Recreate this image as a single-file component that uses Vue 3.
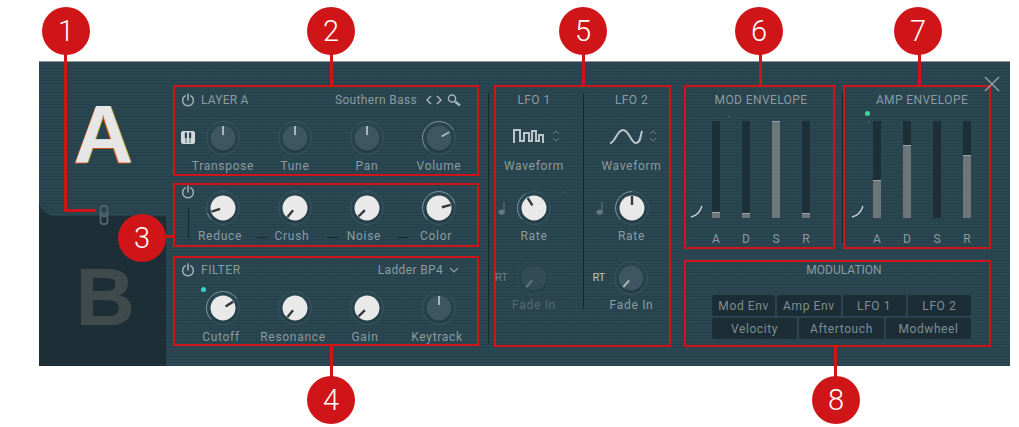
<script setup>
// knob angles are degrees from 12 o'clock, -135 is fully left
const layerKnobs = [
  { label: 'Transpose', angle: 0, bipolar: true },
  { label: 'Tune', angle: 0, bipolar: true },
  { label: 'Pan', angle: 0, bipolar: true },
  { label: 'Volume', angle: 60 },
]
const fxKnobs = [
  { label: 'Reduce', angle: -108, white: true },
  { label: 'Crush', angle: -140, white: true },
  { label: 'Noise', angle: -135, white: true },
  { label: 'Color', angle: 75, white: true },
]
const filterKnobs = [
  { label: 'Cutoff', angle: 58, white: true },
  { label: 'Resonance', angle: -140, white: true },
  { label: 'Gain', angle: -135, white: true },
  { label: 'Keytrack', angle: 0, bipolar: true },
]
const lfos = [
  { name: 'LFO 1', wave: 'M1 15V2h6v11h4V5h5v8h3V3h4v10h3V7h4v8', rate: -32, fade: -140, dim: true },
  { name: 'LFO 2', wave: 'M0 15C5 15 7 2 13 2s8 13 13 13S30 8 32 3', rate: 0, fade: -140, dim: false },
]
const envelopes = [
  {
    title: 'MOD ENVELOPE',
    bars: [{ label: 'A', fill: 6 }, { label: 'D', fill: 5 }, { label: 'S', fill: 97 }, { label: 'R', fill: 5 }],
  },
  {
    title: 'AMP ENVELOPE',
    dot: true,
    bars: [{ label: 'A', fill: 38 }, { label: 'D', fill: 73 }, { label: 'S', fill: 0 }, { label: 'R', fill: 63 }],
  },
]
const modRows = [
  ['Mod Env', 'Amp Env', 'LFO 1', 'LFO 2'],
  ['Velocity', 'Aftertouch', 'Modwheel'],
]

// arc of the value ring, from the left stop to the knob angle
const arc = (angle) => {
  const point = (deg) => {
    const rad = (deg * Math.PI) / 180
    return `${(18 + 16.5 * Math.sin(rad)).toFixed(2)} ${(18 - 16.5 * Math.cos(rad)).toFixed(2)}`
  }
  return `M${point(-135)}A16.5 16.5 0 ${angle > 45 ? 1 : 0} 1 ${point(angle)}`
}
const showArc = (knob) => !knob.bipolar && knob.angle > -135
</script>

<template>
  <div class="page">
    <div class="panel">
      <div class="layers">
        <div class="layer-a">
          <span class="letter letter-a">A</span>
          <svg class="link" width="10" height="20" viewBox="0 0 10 20">
            <rect x="1.5" y="0.8" width="7" height="10.5" rx="3" />
            <rect x="1.5" y="8.7" width="7" height="10.5" rx="3" />
          </svg>
        </div>
        <div class="layer-b">
          <span class="letter letter-b">B</span>
        </div>
      </div>

      <div class="main">
        <div class="col-left">
          <section class="box layer">
            <div class="head">
              <svg class="power" width="14" height="14" viewBox="0 0 14 14">
                <path d="M4.2 2.8a5.4 5.4 0 1 0 5.6 0M7 1v6" />
              </svg>
              <span class="name">LAYER A</span>
              <span class="preset">Southern Bass</span>
              <svg class="browse" width="38" height="14" viewBox="0 0 38 14">
                <path d="M6 3 2 7l4 4M12 3l4 4-4 4" />
                <circle cx="27" cy="5.5" r="3.6" />
                <path class="thick" d="m30 8.5 5 4" />
              </svg>
            </div>
            <div class="knobs">
              <div v-for="k in layerKnobs" :key="k.label" class="cell">
                <svg class="knob" width="36" height="36" viewBox="0 0 36 36">
                  <circle class="ring" cx="18" cy="18" r="16.5" />
                  <path v-if="showArc(k)" class="value" :d="arc(k.angle)" />
                  <circle class="shade" cx="18" cy="19" r="13.5" />
                  <circle :class="k.white ? 'cap-white' : 'cap-dark'" cx="18" cy="18" r="12.5" />
                  <line :class="k.white ? 'tick-dark' : 'tick-light'" x1="18" y1="6" x2="18" y2="15" :transform="`rotate(${k.angle} 18 18)`" />
                </svg>
                <span class="label">{{ k.label }}</span>
              </div>
            </div>
            <svg class="keys" width="14" height="13" viewBox="0 0 14 13">
              <rect class="key-base" x="0.5" y="0.5" width="13" height="12" rx="1.5" />
              <path class="key-gap" d="M5 7v5M9 7v5" />
              <path class="black-key" d="M3.8 1.5h2.2V7H3.8zM8 1.5h2.2V7H8z" />
            </svg>
          </section>

          <section class="box fx">
            <svg class="power power-fx" width="14" height="14" viewBox="0 0 14 14">
              <path d="M4.2 2.8a5.4 5.4 0 1 0 5.6 0M7 1v6" />
            </svg>
            <span class="route route-v"></span>
            <span class="route route-a"></span>
            <span class="route route-b"></span>
            <span class="route route-c"></span>
            <div class="knobs">
              <div v-for="k in fxKnobs" :key="k.label" class="cell">
                <svg class="knob" width="36" height="36" viewBox="0 0 36 36">
                  <circle class="ring" cx="18" cy="18" r="16.5" />
                  <path v-if="showArc(k)" class="value" :d="arc(k.angle)" />
                  <circle class="shade" cx="18" cy="19" r="13.5" />
                  <circle :class="k.white ? 'cap-white' : 'cap-dark'" cx="18" cy="18" r="12.5" />
                  <line :class="k.white ? 'tick-dark' : 'tick-light'" x1="18" y1="6" x2="18" y2="15" :transform="`rotate(${k.angle} 18 18)`" />
                </svg>
                <span class="label">{{ k.label }}</span>
              </div>
            </div>
          </section>

          <section class="box filter">
            <div class="head">
              <svg class="power" width="14" height="14" viewBox="0 0 14 14">
                <path d="M4.2 2.8a5.4 5.4 0 1 0 5.6 0M7 1v6" />
              </svg>
              <span class="name">FILTER</span>
              <span class="preset">Ladder BP4</span>
              <svg class="chevron" width="10" height="6" viewBox="0 0 10 6">
                <path d="m1 1 4 4 4-4" />
              </svg>
            </div>
            <span class="dot dot-teal"></span>
            <div class="knobs">
              <div v-for="k in filterKnobs" :key="k.label" class="cell">
                <svg class="knob" width="36" height="36" viewBox="0 0 36 36">
                  <circle class="ring" cx="18" cy="18" r="16.5" />
                  <path v-if="showArc(k)" class="value" :d="arc(k.angle)" />
                  <circle class="shade" cx="18" cy="19" r="13.5" />
                  <circle :class="k.white ? 'cap-white' : 'cap-dark'" cx="18" cy="18" r="12.5" />
                  <line :class="k.white ? 'tick-dark' : 'tick-light'" x1="18" y1="6" x2="18" y2="15" :transform="`rotate(${k.angle} 18 18)`" />
                </svg>
                <span class="label">{{ k.label }}</span>
              </div>
            </div>
          </section>
        </div>

        <section class="box lfos">
          <span class="lfo-divider"></span>
          <div v-for="lfo in lfos" :key="lfo.name" class="lfo">
            <span class="title">{{ lfo.name }}</span>
            <div class="wave-row">
              <svg class="wave" width="34" height="16" viewBox="0 0 34 16">
                <path :d="lfo.wave" />
              </svg>
              <svg class="updown" width="8" height="12" viewBox="0 0 8 12">
                <path d="m1 4 3-3 3 3M1 8l3 3 3-3" />
              </svg>
            </div>
            <span class="label wave-label">Waveform</span>
            <div class="knob-wrap rate">
              <svg class="note" width="8" height="14" viewBox="0 0 8 14">
                <path d="M6 1v10" />
                <ellipse cx="3.6" cy="11.2" rx="2.8" ry="2.2" />
              </svg>
              <svg class="knob" width="36" height="36" viewBox="0 0 36 36">
                <circle class="ring" cx="18" cy="18" r="16.5" />
                <path class="value" :d="arc(lfo.rate)" />
                <circle class="shade" cx="18" cy="19" r="13.5" />
                <circle class="cap-white" cx="18" cy="18" r="12.5" />
                <line class="tick-dark" x1="18" y1="6" x2="18" y2="15" :transform="`rotate(${lfo.rate} 18 18)`" />
              </svg>
            </div>
            <span class="label">Rate</span>
            <div class="fade" :class="{ dim: lfo.dim }">
              <div class="knob-wrap fade-knob">
                <span class="rt">RT</span>
                <svg class="knob" width="36" height="36" viewBox="0 0 36 36">
                  <circle class="ring" cx="18" cy="18" r="16.5" />
                  <circle class="shade" cx="18" cy="19" r="13.5" />
                  <circle class="cap-dark" cx="18" cy="18" r="12.5" />
                  <line class="tick-light" x1="18" y1="6" x2="18" y2="15" :transform="`rotate(${lfo.fade} 18 18)`" />
                </svg>
              </div>
              <span class="label fade-label">Fade In</span>
            </div>
          </div>
        </section>

        <div class="col-right">
          <div class="env-row">
            <section v-for="env in envelopes" :key="env.title" class="box env">
              <div class="env-inner">
                <span class="title">{{ env.title }}</span>
                <span v-if="env.dot" class="dot dot-green"></span>
                <svg class="curve" width="14" height="13" viewBox="0 0 14 13">
                  <path d="M1 12c6-1 9-5 11-11" />
                </svg>
                <div class="bars">
                  <div v-for="bar in env.bars" :key="bar.label" class="bar-cell">
                    <div class="track">
                      <div v-if="bar.fill" class="fill" :style="{ height: bar.fill + 'px' }"></div>
                    </div>
                    <span class="label">{{ bar.label }}</span>
                  </div>
                </div>
              </div>
            </section>
          </div>
          <section class="box modulation">
            <span class="title">MODULATION</span>
            <div v-for="(row, i) in modRows" :key="i" class="mod-row">
              <button v-for="name in row" :key="name" class="mod-btn">{{ name }}</button>
            </div>
          </section>
        </div>
      </div>

      <span class="divider divider-left"></span>
      <span class="divider divider-env"></span>
      <svg class="close" width="16" height="16" viewBox="0 0 16 16">
        <path d="m1 1 14 14M15 1 1 15" />
      </svg>
    </div>

    <!-- annotation callouts on top of the screenshot -->
    <span class="leader l1v"></span>
    <span class="leader l1h"></span>
    <span class="leader l2"></span>
    <span class="leader l3"></span>
    <span class="leader l4"></span>
    <span class="leader l5"></span>
    <span class="leader l6"></span>
    <span class="leader l7"></span>
    <span class="leader l8"></span>
    <span class="badge b1">1</span>
    <span class="badge b2">2</span>
    <span class="badge b3">3</span>
    <span class="badge b4">4</span>
    <span class="badge b5">5</span>
    <span class="badge b6">6</span>
    <span class="badge b7">7</span>
    <span class="badge b8">8</span>
  </div>
</template>

<style>
html,
body {
  margin: 0;
  background: #fff;
}
</style>

<style scoped>
.page {
  position: relative;
  width: 1019px;
  height: 427px;
  padding: 62px 9px 61px 39px;
  box-sizing: border-box;
  overflow: hidden;
  font-family: Roboto, "Liberation Sans", sans-serif;
  color: #8c9ba0;
}

.panel {
  position: relative;
  display: flex;
  height: 304px;
  background-color: #294651;
  background-image: radial-gradient(circle at 113px 60px, rgba(120, 170, 170, 0.25) 0 1px, transparent 1.5px),
    radial-gradient(circle at 830px 60px, rgba(120, 170, 170, 0.25) 0 1px, transparent 1.5px),
    radial-gradient(circle at 690px 55px, rgba(120, 170, 170, 0.2) 0 1px, transparent 1.5px),
    radial-gradient(circle at 525px 130px, rgba(120, 170, 170, 0.2) 0 1px, transparent 1.5px),
    repeating-linear-gradient(0deg, rgba(0, 0, 0, 0.07) 0 1px, transparent 1px 3px),
    repeating-linear-gradient(90deg, rgba(255, 255, 255, 0.012) 0 1px, transparent 1px 3px);
  box-shadow: 0 -1px 0 #8c9a9e;
}

.layers {
  display: flex;
  flex-direction: column;
  width: 127px;
  flex: none;
  background: #1d3038;
}

.layer-a {
  position: relative;
  height: 154px;
  display: flex;
  justify-content: center;
  padding: 31px 0 0 1px;
  box-sizing: border-box;
  background-color: #294651;
  background-image: repeating-linear-gradient(0deg, rgba(0, 0, 0, 0.07) 0 1px, transparent 1px 3px);
  border-radius: 0 0 0 16px;
}

.layer-b {
  flex: 1;
  display: flex;
  justify-content: center;
  padding: 40px 0 0 5px;
  box-sizing: border-box;
  background-color: #1d3038;
  background-image: repeating-linear-gradient(0deg, rgba(0, 0, 0, 0.08) 0 1px, transparent 1px 3px);
  border-radius: 0 6px 0 0;
}

.letter {
  font-family: "Liberation Sans", sans-serif;
  font-weight: 700;
  font-size: 82px;
  line-height: 82px;
}

.letter-a {
  color: #e6e6e6;
  text-shadow: -1px 1px 0 #d2551c, 1px 0 0 #c9b544;
}

.letter-b {
  color: #3f4a4d;
  text-shadow: 0 0 1px #5a4a40;
}

.link {
  position: absolute;
  left: 60px;
  top: 143px;
  fill: none;
  stroke: #52666d;
  stroke-width: 1.8;
}

.main {
  display: flex;
  padding: 23px 0 0 7px;
  gap: 15px;
}

.box {
  position: relative;
  box-sizing: border-box;
  border: 2px solid #cf1518;
}

.col-left {
  display: flex;
  flex-direction: column;
  width: 306px;
}

.layer {
  height: 91px;
  padding-top: 6px;
}

.fx {
  height: 64px;
  margin-top: 7px;
  padding-top: 5px;
}

.filter {
  height: 90px;
  margin-top: 9px;
  padding-top: 5px;
}

.head {
  display: flex;
  align-items: center;
  height: 14px;
  padding: 0 14px 0 6px;
  font-size: 12px;
  letter-spacing: 0.6px;
}

.name {
  margin-left: 6px;
}

.layer .name {
  letter-spacing: 0.2px;
}

.preset {
  margin-left: auto;
  letter-spacing: 0.35px;
}

.power {
  fill: none;
  stroke: #a5b1b5;
  stroke-width: 1.5;
  stroke-linecap: round;
}

.power-fx {
  position: absolute;
  left: 6px;
  top: 0;
}

.browse {
  margin-left: 8px;
  fill: none;
  stroke: #a5b1b5;
  stroke-width: 1.5;
}

.browse .thick {
  stroke-width: 2.4;
}

.chevron {
  margin: 0 4px 0 6px;
  fill: none;
  stroke: #8c9ba0;
  stroke-width: 1.2;
}

.keys {
  position: absolute;
  left: 6px;
  top: 44px;
}

.keys .key-base {
  fill: #d3d8da;
  stroke: #d3d8da;
}

.keys .key-gap {
  stroke: #294651;
  stroke-width: 0.8;
}

.keys .black-key {
  fill: #294651;
}

.knobs {
  display: grid;
  grid-template-columns: repeat(4, 72px);
  padding-left: 12px;
  margin-top: 13px;
}

.fx .knobs {
  margin-top: 0;
}

.cell {
  display: flex;
  flex-direction: column;
  align-items: center;
}

.label {
  height: 14px;
  margin-top: 3px;
  font-size: 12px;
  line-height: 14px;
  letter-spacing: 0.7px;
  white-space: nowrap;
}

.fx .label {
  margin-right: 6px;
}

.filter .label {
  margin-top: 4px;
  margin-right: 4px;
}

.knob {
  display: block;
  overflow: visible;
}

.ring {
  fill: none;
  stroke: #385560;
}

.value {
  fill: none;
  stroke: #7f9097;
}

.shade {
  fill: rgba(10, 25, 32, 0.2);
}

.cap-dark {
  fill: #3e5661;
}

.cap-white {
  fill: #e9e9e9;
}

.tick-light {
  stroke: #abb5b8;
  stroke-width: 2;
}

.tick-dark {
  stroke: #33383b;
  stroke-width: 2.4;
}

.dot {
  position: absolute;
  border-radius: 50%;
}

.dot-teal {
  left: 26px;
  top: 29px;
  width: 5px;
  height: 5px;
  background: #3ccfd0;
}

.dot-green {
  width: 5px;
  height: 5px;
  background: #3fd69c;
}

.route {
  position: absolute;
  background: #17262c;
}

.route-v {
  left: 13px;
  top: 23px;
  width: 1px;
  height: 30px;
}

.route-a {
  left: 82px;
  top: 52px;
  width: 10px;
  height: 1px;
}

.route-b {
  left: 152px;
  top: 52px;
  width: 11px;
  height: 1px;
}

.route-c {
  left: 223px;
  top: 52px;
  width: 10px;
  height: 1px;
}

.lfos {
  display: grid;
  grid-template-columns: 76px 75px;
  column-gap: 22px;
  width: 177px;
  height: 262px;
}

.lfo-divider {
  position: absolute;
  left: 87px;
  top: 6px;
  width: 1px;
  height: 216px;
  background: #17262c;
}

.lfo {
  display: flex;
  flex-direction: column;
  align-items: center;
  padding-top: 6px;
}

.title {
  display: block;
  height: 14px;
  font-size: 12px;
  line-height: 14px;
  letter-spacing: 0.4px;
  white-space: nowrap;
}

.wave-row {
  display: flex;
  align-items: center;
  gap: 5px;
  margin-top: 21px;
  padding-left: 4px;
}

.wave {
  display: block;
  fill: none;
  stroke: #bcc5c8;
  stroke-width: 2;
}

.updown {
  fill: none;
  stroke: #6f8087;
  stroke-width: 1;
}

.wave-label {
  margin-top: 15px;
}

.knob-wrap {
  position: relative;
}

.rate {
  margin-top: 17px;
}

.note {
  position: absolute;
  left: -18px;
  top: 11px;
  fill: #66777d;
  stroke: #66777d;
}

.fade {
  display: flex;
  flex-direction: column;
  align-items: center;
  margin-top: 17px;
}

.fade.dim {
  opacity: 0.45;
}

.fade-label {
  margin-top: 2px;
}

.rt {
  position: absolute;
  left: -21px;
  top: 11px;
  font-size: 11px;
  line-height: 14px;
  color: #b9c3c6;
}

.col-right {
  display: flex;
  flex-direction: column;
  margin-left: -2px;
  width: 307px;
}

.env-row {
  display: flex;
  gap: 8px;
}

.env {
  width: 151px;
  height: 164px;
  padding: 6px 0 0 15px;
}

.env + .env {
  width: 148px;
  padding-left: 17px;
}

.env-inner {
  position: relative;
  width: 120px;
  text-align: center;
}

.curve {
  position: absolute;
  left: -11px;
  top: 112px;
  fill: none;
  stroke: #c9d0d3;
  stroke-width: 1.4;
}

.env .dot-green {
  left: 3px;
  top: 18px;
}

.bars {
  display: grid;
  grid-template-columns: repeat(4, 30px);
  margin-top: 14px;
}

.bar-cell {
  display: flex;
  flex-direction: column;
  align-items: center;
}

.track {
  display: flex;
  flex-direction: column;
  justify-content: flex-end;
  width: 8px;
  height: 97px;
  background: #1d3038;
}

.fill {
  background: #6d7679;
  border-top: 1px solid #9aa2a5;
  box-sizing: border-box;
}

.bar-cell .label {
  margin-top: 14px;
  letter-spacing: 0;
}

.modulation {
  height: 87px;
  margin-top: 11px;
  padding: 1px 0 0 26px;
}

.modulation .title {
  width: 259px;
  padding-left: 5px;
  box-sizing: border-box;
  text-align: center;
  letter-spacing: 0;
}

.mod-row {
  display: flex;
  gap: 2px;
  width: 259px;
  margin-top: 2px;
}

.modulation .title + .mod-row {
  margin-top: 18px;
}

.mod-btn {
  flex: 1 1 0;
  height: 21px;
  padding: 0;
  border: none;
  border-radius: 2px;
  background: #1c2d35;
  color: #7f8e93;
  font-family: inherit;
  font-size: 12px;
  letter-spacing: 0.6px;
}

.divider {
  position: absolute;
  width: 1px;
  background: #17262c;
}

.divider-left {
  left: 449px;
  top: 31px;
  height: 250px;
}

.divider-env {
  left: 803px;
  top: 31px;
  height: 150px;
}

.close {
  position: absolute;
  left: 945px;
  top: 14px;
  fill: none;
  stroke: #8c9ba0;
  stroke-width: 1.6;
}

.leader {
  position: absolute;
  background: #cf1518;
}

.l1v {
  left: 64px;
  top: 50px;
  width: 3px;
  height: 162px;
}

.l1h {
  left: 64px;
  top: 209px;
  width: 32px;
  height: 3px;
}

.l2,
.l5,
.l6,
.l7 {
  top: 50px;
  width: 3px;
  height: 36px;
}

.l2 {
  left: 330px;
}

.l5 {
  left: 582px;
}

.l6 {
  left: 759px;
}

.l7 {
  left: 918px;
}

.l3 {
  left: 160px;
  top: 235px;
  width: 14px;
  height: 3px;
}

.l4,
.l8 {
  top: 345px;
  width: 3px;
  height: 36px;
}

.l4 {
  left: 330px;
}

.l8 {
  left: 834px;
}

.badge {
  position: absolute;
  width: 48px;
  height: 48px;
  border-radius: 50%;
  background: #cf1518;
  color: #fff;
  font-size: 29px;
  font-weight: 300;
  line-height: 48px;
  text-align: center;
}

.b1 { left: 42px; top: 7px; }
.b2 { left: 307px; top: 7px; }
.b3 { left: 118px; top: 214px; }
.b4 { left: 307px; top: 376px; }
.b5 { left: 559px; top: 7px; }
.b6 { left: 735px; top: 7px; }
.b7 { left: 894px; top: 7px; }
.b8 { left: 812px; top: 376px; }
</style>
